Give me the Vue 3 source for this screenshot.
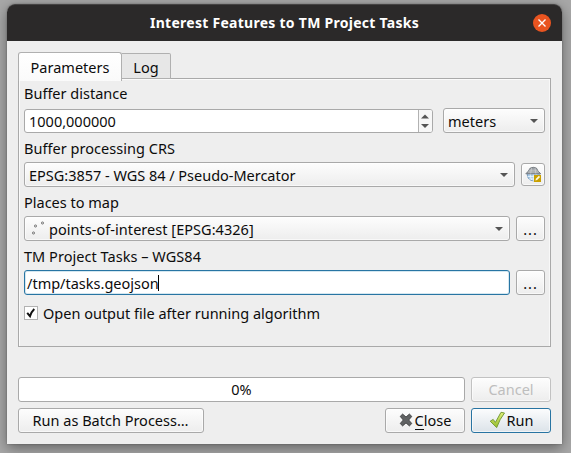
<script setup>
import { ref } from 'vue'

const distance = ref('1000,000000')
const output = ref('/tmp/tasks.geojson')
const progress = ref(0)
</script>

<template>
  <main class="desktop">
    <section class="dialog">
      <header class="titlebar">
        <h1>Interest Features to TM Project Tasks</h1>
        <span class="window-close">
          <svg width="18" height="18" viewBox="0 0 18 18"><path d="M5.5 5.5l7 7M12.5 5.5l-7 7" stroke="#fff" stroke-width="1.35" fill="none" /></svg>
        </span>
      </header>

      <div class="body">
        <nav class="tabs">
          <div class="tab active"><span>Parameters</span></div>
          <div class="tab"><span>Log</span></div>
        </nav>

        <div class="panel">
          <label>Buffer distance</label>
          <div class="row distance-row">
            <div class="spin">
              <span>{{ distance }}</span>
              <span class="steps">
                <svg width="13" height="22" viewBox="0 0 13 22"><path d="M2 8.5L6 4.5 10 8.5zM2 14h8L6 18z" fill="#555" /></svg>
              </span>
            </div>
            <div class="box unit"><span>meters</span><i class="arrow"></i></div>
          </div>

          <label class="t-crs">Buffer processing CRS</label>
          <div class="row">
            <div class="box grow crs"><span class="t-epsg">EPSG:3857 - WGS 84 / Pseudo-Mercator</span><i class="arrow"></i></div>
            <div class="box globe">
              <svg width="17" height="17" viewBox="0 0 17 17">
                <circle cx="8.3" cy="8.8" r="6" fill="#a9cbe9" stroke="#648eb4" stroke-width=".8" />
                <path d="M2.5 10.5h11M4 13h8M8.3 8v7M5.2 8q.2 4 1.6 6M11.3 8q-.2 4-1.6 6" fill="none" stroke="#eef6fc" stroke-width=".8" />
                <path d="M.8 7.8L3.5 5Q4.2 1.3 8.3 1.3T13 5l2.8 2.8z" fill="#9a9fa4" stroke="#70767c" stroke-width=".9" />
                <path d="M4 4.2h8.6M3 6h10.8M6.5 2L5.7 7.5M10 2l.8 5.5" fill="none" stroke="#d5d8da" stroke-width=".65" />
                <path d="M9 9h7v7H9z" fill="#c9a000" />
                <path d="M10.4 14.6l.5-1.8 3-3 1.2 1.2-3 3z" fill="#fff9dc" />
              </svg>
            </div>
          </div>

          <label>Places to map</label>
          <div class="row">
            <div class="box grow layer">
              <svg class="points" width="18" height="18" viewBox="0 0 18 18"><g fill="#ddd" stroke="#666" stroke-width=".8"><circle cx="7.5" cy="6" r="1.1" /><circle cx="14.5" cy="3" r="1.1" /><circle cx="5.5" cy="13" r="1.1" /></g></svg>
              <span class="t-points">points-of-interest [EPSG:4326]</span><i class="arrow"></i>
            </div>
            <div class="box more"><span>...</span></div>
          </div>

          <label class="t-tm">TM Project Tasks – WGS84</label>
          <div class="row">
            <div class="box grow field"><span>{{ output }}</span><i class="caret"></i></div>
            <div class="box more"><span>...</span></div>
          </div>

          <div class="check-row">
            <span class="check">
              <svg width="12" height="12" viewBox="0 0 12 12"><path d="M2.2 5.8L5 9.2Q6.5 4.5 9.3 1.9" fill="none" stroke="#111" stroke-width="2" /></svg>
            </span>
            <span class="t-open">Open output file after running algorithm</span>
          </div>
        </div>

        <div class="footer">
          <div class="box progress"><span>{{ progress }}%</span></div>
          <div class="box button disabled"><span>Cancel</span></div>
        </div>
        <div class="footer actions">
          <div class="box batch"><span>Run as Batch Process…</span></div>
          <div class="box button close">
            <svg width="14" height="14" viewBox="0 0 14 14"><path d="M1.2 3.4L3.6 1.1 7 4l3.4-2.9 2.4 2.3L9.7 7l3.1 3.5-2.4 2.4L7 9.9l-3.4 3-2.4-2.4L4.3 7z" fill="#606263" stroke="#3f4142" stroke-width=".9" stroke-linejoin="round" /></svg>
            <span><span class="mnemonic">C</span>lose</span>
          </div>
          <div class="box button run">
            <svg width="17" height="18" viewBox="0 0 17 18">
              <defs><linearGradient id="leaf" x1="0" y1="0" x2="0" y2="1"><stop offset="0" stop-color="#e2f07d" /><stop offset="1" stop-color="#94bd2b" /></linearGradient></defs>
              <path d="M1.2 10.2l3-1.8 2.2 3L12 1.3l3.5.7Q10.7 8 7.7 16.6z" fill="url(#leaf)" stroke="#6c942b" stroke-width=".9" stroke-linejoin="round" />
            </svg>
            <span>Run</span>
          </div>
        </div>
      </div>
    </section>
  </main>
</template>

<style>
body {
  background: #999;
  overflow: hidden;
}
</style>

<style scoped>
* { box-sizing: border-box; }

.desktop {
  width: 571px;
  height: 453px;
  padding: 4px 9px 9px 7px;
  background: #a8a8a8;
  overflow: hidden;
  font-family: "Noto Sans", "Open Sans", sans-serif;
  font-size: 14.5px;
  line-height: 20px;
  color: #0c0c0c;
  white-space: nowrap;
}
.dialog {
  width: 555px;
  height: 440px;
  border-radius: 8px 8px 0 0;
  background: #eee;
  box-shadow: 0 4px 14px rgba(0, 0, 0, .42), 0 0 2px rgba(0, 0, 0, .3);
}
.titlebar {
  display: grid;
  grid-template-columns: 30px 1fr 30px;
  align-items: center;
  height: 37px;
  border-radius: 8px 8px 0 0;
  border-top: 1px solid #454343;
  background: #2b2929;
}
h1 {
  grid-column: 2;
  justify-self: center;
  margin: 0;
  font-size: 14px;
  font-weight: 700;
  letter-spacing: .27px;
  color: #fff;
}
.window-close {
  width: 18px;
  height: 18px;
  margin-left: 1px;
  border-radius: 50%;
  background: #e95420;
}
svg { display: block; flex: none; }

.body { padding: 11px 11px 0; }
.tabs { display: flex; align-items: flex-end; height: 27px; margin-bottom: -1px; }
.tab {
  display: flex;
  align-items: center;
  justify-content: center;
  width: 49px;
  height: 26px;
  padding-top: 1px;
  border: 1px solid #b0b0b0;
  border-left: 0;
  border-radius: 0 2px 0 0;
  background: #e7e7e7;
}
.tab.active {
  position: relative;
  z-index: 1;
  width: 104px;
  height: 29px;
  margin-bottom: -2px;
  padding: 0 0 1px;
  border-left: 1px solid #adadad;
  border-bottom: 0;
  border-radius: 3px 3px 0 0;
  background: linear-gradient(#fff, #fafafa);
}
.panel {
  width: 533px;
  height: 269px;
  padding: 4px 5px 0;
  border: 1px solid #a9a9a9;
  box-shadow: inset 1px 1px #fafafa, inset -1px 0 #f8f8f8;
}
.panel > label { display: block; height: 20px; width: max-content; }
.row { display: flex; gap: 6px; height: 25px; margin: 4px 0 5px; }
.distance-row { gap: 10px; margin-top: 5px; }
.grow { flex: 1; }

.spin {
  display: flex;
  align-items: center;
  justify-content: space-between;
  width: 409px;
  height: 24px;
  margin-top: 1px;
  padding-left: 4px;
  border: 1px solid #a9a9a9;
  border-radius: 3px;
  background: #fff;
}
.steps {
  width: 14px;
  height: 22px;
  border-left: 1px solid #b2b2b2;
  border-radius: 0 2px 2px 0;
  background: #f7f7f7;
}
.box {
  display: flex;
  align-items: center;
  height: 25px;
  padding: 0 5px;
  border: 1px solid #a9a9a9;
  border-radius: 3px;
  background: linear-gradient(#fdfdfd, #ededed);
  box-shadow: inset 0 0 0 1px rgba(255, 255, 255, .6);
}
.unit { width: 102px; padding-left: 4px; }
.crs { padding-left: 4px; }
.arrow {
  margin: 0 1px 0 auto;
  border: solid transparent;
  border-width: 4px 4px 0;
  border-top-color: #555;
}
.globe {
  width: 24px;
  height: 23px;
  margin-top: 1px;
  padding: 0;
  justify-content: center;
}
.more {
  width: 29px;
  justify-content: center;
  padding: 1px 0 0;
  letter-spacing: 1px;
}
.layer { padding-left: 3px; }
.points { margin-right: 3px; }
.field {
  padding: 0 2px;
  border-color: #2875a3;
  background: #fff;
  box-shadow: inset 0 0 0 1px #d4e7f0;
}
.caret { width: 1px; height: 16px; margin-left: -1px; background: #000; }
.t-crs, .t-points, .t-tm { letter-spacing: .04px; }
.t-epsg { letter-spacing: -.02px; }
.check-row { display: flex; align-items: center; gap: 5px; margin-top: 8px; }
.check {
  width: 14px;
  height: 14px;
  border: 1px solid #b2b2b2;
  background: #fff;
}
.footer { display: flex; gap: 6px; margin-top: 30px; }
.footer .box { padding-bottom: 2px; }
.actions { margin-top: 6px; }
.progress {
  width: 447px;
  justify-content: center;
  background: #fff;
}
.button { width: 80px; justify-content: center; }
.disabled { color: #bebebe; border-color: #c2c2c2; }
.batch { width: 186px; justify-content: center; margin-right: 175px; padding-right: 6px; }
.close { gap: 2px; }
.run {
  gap: 1px;
  border-color: #2874a2;
  background: linear-gradient(#fbfcfd, #dce3e9);
}
.mnemonic { box-shadow: 0 1px #111; display: inline-block; line-height: 17px; }
</style>
